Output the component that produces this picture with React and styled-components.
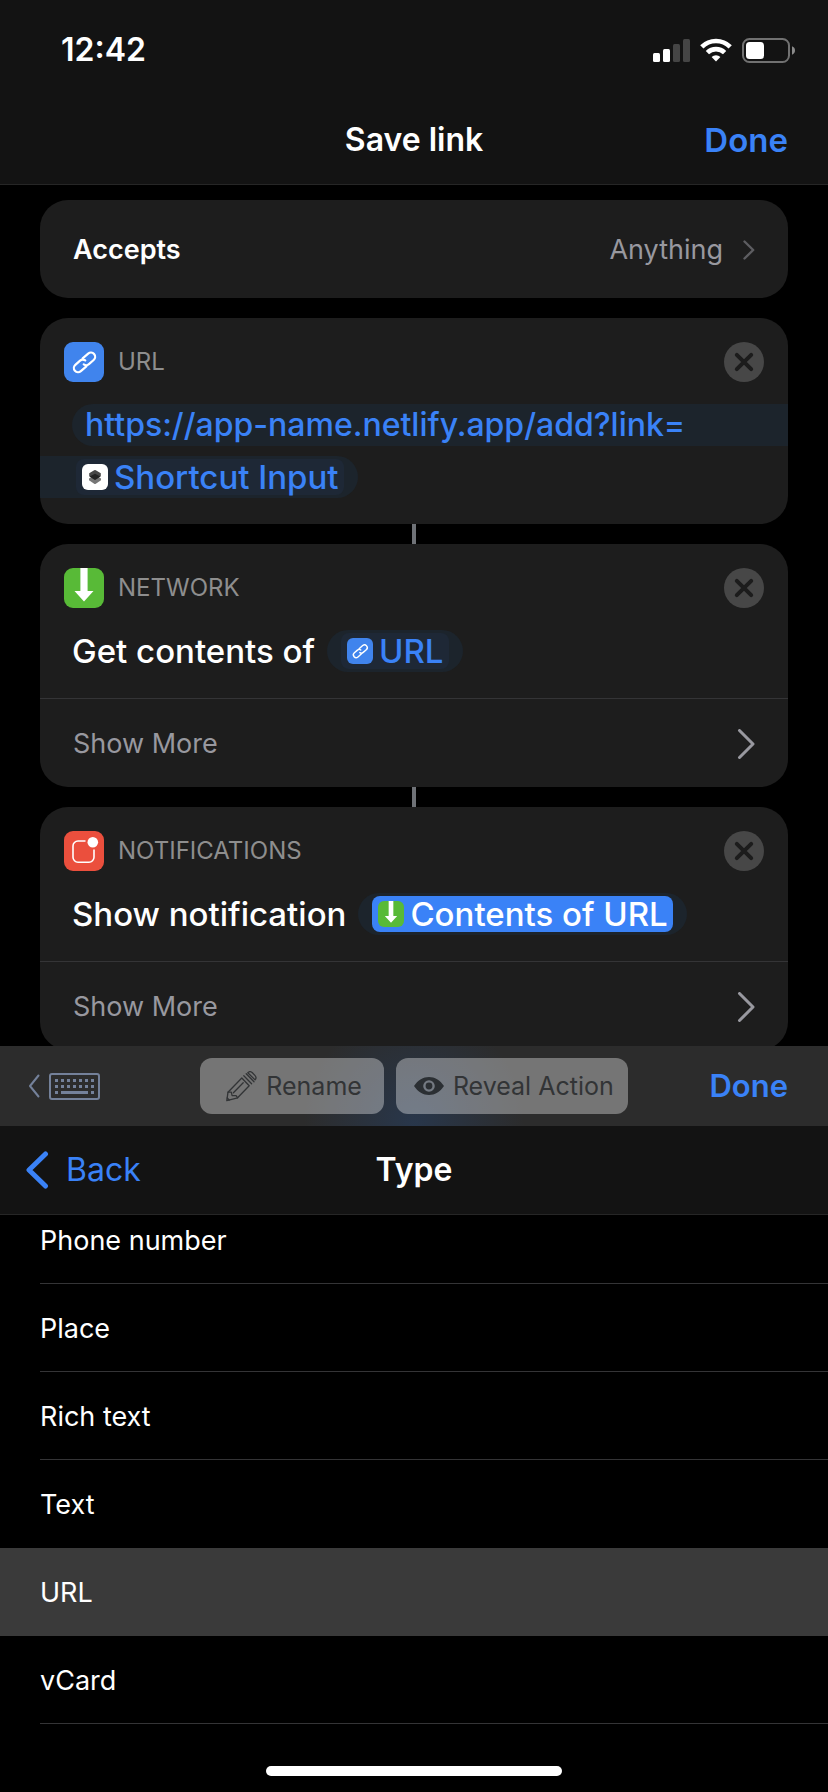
import React from 'react';
import styled, { createGlobalStyle, css } from 'styled-components';

const color = {
  bar: '#131313',
  card: '#1d1d1d',
  line: '#343436',
  blue: '#3a82f7',
  muted: '#98989f',
  label: '#8e8e8e',
};

const GlobalStyle = createGlobalStyle`
  *, *::before, *::after { box-sizing: border-box; }
  body { margin: 0; background: #000; }
  button, input { font: inherit; color: inherit; background: none; border: 0; padding: 0; margin: 0; }
  button { cursor: pointer; }
  svg { display: block; flex: none; }
`;

const Screen = styled.div`
  display: flex;
  flex-direction: column;
  height: 100vh;
  overflow: hidden;
  background: #000;
  color: #fff;
  font-family: Inter, "Liberation Sans", sans-serif;
  font-size: 27px;
  line-height: 40px;
`;

const TopBar = styled.header`
  flex: none;
  background: ${color.bar};
  border-bottom: 1px solid #262626;
`;

const StatusBar = styled.div`
  display: flex;
  align-items: center;
  justify-content: space-between;
  height: 96px;
  padding: 4px 33px 0 61px;
  font-size: 32px;
  font-weight: 600;
`;

const StatusIcons = styled.div`
  display: flex;
  align-items: center;
  gap: 10px;
`;

const NavBar = styled.div`
  display: grid;
  grid-template-columns: 1fr auto 1fr;
  align-items: center;
  height: 88px;
  padding: 0 ${(p) => (p.$back ? '24px' : '40px')};
`;

const NavTitle = styled.h1`
  grid-column: 2;
  margin: 0;
  font-size: 32px;
  line-height: 40px;
  font-weight: 600;
`;

const DoneButton = styled.button`
  grid-column: 3;
  justify-self: end;
  color: ${color.blue};
  font-size: ${(p) => (p.$small ? '31px' : '33px')};
  font-weight: 600;
`;

const BackButton = styled.button`
  display: flex;
  align-items: center;
  justify-self: start;
  gap: 17px;
  color: ${color.blue};
  font-size: 32px;
`;

const Editor = styled.main`
  flex: 1 1 0;
  min-height: 0;
  overflow: hidden;
  padding: 15px 40px 0;
`;

const Card = styled.section`
  overflow: hidden;
  border-radius: 28px;
  background: ${color.card};
`;

const AcceptsRow = styled.button`
  display: flex;
  align-items: center;
  width: 100%;
  height: 98px;
  margin-bottom: 20px;
  padding: 2px 33px 0;
  border-radius: 28px;
  background: ${color.card};
  font-weight: 600;
`;

const AcceptsValue = styled.span`
  margin-left: auto;
  padding-right: 20px;
  color: ${color.muted};
  font-weight: 400;
`;

const Connector = styled.div`
  width: 4px;
  height: 20px;
  margin: 0 auto;
  background: #6f7277;
`;

const CardHeader = styled.div`
  display: flex;
  align-items: center;
  gap: 14px;
  padding: 24px 24px 22px;
`;

const CardLabel = styled.h2`
  margin: 0;
  color: ${color.label};
  font-size: 24px;
  line-height: 40px;
  font-weight: 400;
`;

const CloseButton = styled.button`
  margin-left: auto;
`;

const AppIcon = styled.span`
  display: block;
  flex: none;
  overflow: hidden;
  width: ${(p) => (p.$small ? '26px' : '40px')};
  height: ${(p) => (p.$small ? '26px' : '40px')};
  border-radius: ${(p) => (p.$small ? '6px' : '9px')};
  background: ${(p) => p.$tint};

  svg {
    width: 100%;
    height: 100%;
  }
`;

const actionText = css`
  font-size: 33px;
  line-height: 42px;
  font-weight: 500;
`;

const ActionLine = styled.div`
  display: flex;
  align-items: center;
  gap: 12px;
  padding: 0 32px 26px;
  ${actionText}
`;

const FieldLines = styled.div`
  display: flex;
  flex-direction: column;
  align-items: flex-start;
  gap: 10px;
  padding-bottom: 26px;
  ${actionText}
`;

const UrlField = styled.input`
  align-self: stretch;
  height: 42px;
  margin-left: 32px;
  padding-left: 13px;
  border-radius: 21px 0 0 21px;
  background: #1c242c;
  color: ${color.blue};
  font-size: 32px;
  outline: none;
`;

const Pill = styled.div`
  display: flex;
  align-items: center;
  height: 42px;
  padding: ${(p) => (p.$continued ? '0 14px 0 36px' : '0 14px')};
  border-radius: ${(p) => (p.$continued ? '0 21px 21px 0' : '21px')};
  background: #1c242c;
`;

const Token = styled.button`
  display: flex;
  align-items: center;
  gap: 6px;
  height: 36px;
  padding: 0 5px 0 6px;
  border-radius: 8px;
  line-height: 36px;
  background: ${(p) => (p.$selected ? color.blue : '#1e2836')};
  color: ${(p) => (p.$selected ? '#fff' : color.blue)};
`;

const ShowMoreRow = styled.button`
  display: flex;
  align-items: center;
  justify-content: space-between;
  width: 100%;
  height: 89px;
  padding: 1px 33px 0;
  border-top: 1px solid ${color.line};
  color: ${color.muted};
`;

const Sheet = styled.section`
  flex: none;
`;

const Toolbar = styled.div`
  display: grid;
  grid-template-columns: 1fr auto 1fr;
  align-items: center;
  height: 80px;
  padding: 0 40px;
  background:
    radial-gradient(ellipse 110px 120px at 50% 100%, rgba(38, 62, 96, 0.6), rgba(38, 62, 96, 0)),
    #2c2c2c;
`;

const KeyboardButton = styled.button`
  display: flex;
  align-items: center;
  justify-self: start;
  gap: 9px;
  margin-left: -12px;
`;

const ToolbarActions = styled.div`
  display: flex;
  gap: 12px;
`;

const ToolbarButton = styled.button`
  display: flex;
  align-items: center;
  gap: 9px;
  height: 56px;
  padding: ${(p) => (p.$wide ? '0 22px 0 26px' : '0 14px 0 18px')};
  border-radius: 12px;
  background: rgba(255, 255, 255, 0.35);
  color: #323436;
  font-size: 25px;
`;

const SheetNav = styled.div`
  position: relative;
  background: ${color.bar};
  border-bottom: 1px solid #262626;
`;

const TypeViewport = styled.div`
  overflow: hidden;
`;

const TypeList = styled.ul`
  margin: -19px 0 0;
  padding: 0;
  list-style: none;
`;

const TypeItem = styled.li`
  padding-left: 40px;
  background: ${(p) => (p.$selected ? '#3a3a3a' : 'transparent')};
`;

const TypeButton = styled.button`
  display: block;
  width: 100%;
  height: 88px;
  padding-top: 3px;
  border-bottom: 1px solid ${(p) => (p.$divider ? color.line : 'transparent')};
  text-align: left;
`;

const HomeArea = styled.div`
  padding: 42px 0 16px;
`;

const HomeIndicator = styled.div`
  width: 296px;
  height: 10px;
  margin: 0 auto;
  border-radius: 5px;
  background: #fff;
`;

function Signal() {
  return (
    <svg width="37" height="24" viewBox="0 0 37 24" fill="#fff" aria-hidden="true">
      <rect x="0" y="15" width="7" height="9" rx="1.5" />
      <rect x="10" y="11" width="7" height="13" rx="1.5" />
      <rect x="20" y="6" width="7" height="18" rx="1.5" fill="#454545" />
      <rect x="30" y="1" width="7" height="23" rx="1.5" fill="#454545" />
    </svg>
  );
}

function Wifi() {
  return (
    <svg width="32" height="24" viewBox="0 0 32 24" aria-hidden="true">
      <g fill="none" stroke="#fff" strokeWidth="4.6">
        <path d="M1.8 8.8a20.2 20.2 0 0 1 28.4 0" />
        <path d="M7.4 14.7a12.2 12.2 0 0 1 17.2 0" />
      </g>
      <path d="M16 23.4l-4.4-4.4a6.2 6.2 0 0 1 8.8 0z" fill="#fff" />
    </svg>
  );
}

function Battery() {
  return (
    <svg width="53" height="25" viewBox="0 0 53 25" aria-hidden="true">
      <rect x="1" y="1" width="46" height="23" rx="6.5" fill="none" stroke="#717171" strokeWidth="2" />
      <rect x="4" y="4" width="18" height="17" rx="3.5" fill="#fff" />
      <path d="M50 8.3c1.8.7 3 2.2 3 4.2s-1.2 3.5-3 4.2z" fill="#8a8a8a" />
    </svg>
  );
}

function Chevron({ size = 'large' }) {
  return size === 'small' ? (
    <svg width="12" height="20" viewBox="0 0 12 20" fill="none" stroke="#5d5d61" strokeWidth="2.4" strokeLinecap="round" strokeLinejoin="round">
      <path d="M1.5 1.5l8.7 8.5-8.7 8.5" />
    </svg>
  ) : (
    <svg width="18" height="30" viewBox="0 0 18 30" fill="none" stroke="#98989f" strokeWidth="3" strokeLinecap="round" strokeLinejoin="round">
      <path d="M2.5 1.5l13.5 13.500-13.500 13.500" />
    </svg>
  );
}

function CloseIcon() {
  return (
    <svg width="40" height="40" viewBox="0 0 40 40" aria-hidden="true">
      <circle cx="20" cy="20" r="20" fill="#474747" />
      <path d="M12.8 12.8l14.4 14.4M27.2 12.8l-14.4 14.4" stroke="#1c1c1c" strokeWidth="4" strokeLinecap="round" />
    </svg>
  );
}

function LinkGlyph() {
  return (
    <svg viewBox="0 0 40 40" aria-hidden="true">
      <g transform="translate(20.5 20.4) rotate(-41)" fill="none" stroke="#fff" strokeWidth="2.2" strokeLinecap="round">
        <path d="M1.2 -4.2H8.5A4.2 4.2 0 0 1 8.5 4.2H2.2A4.2 4.2 0 0 1 -1.9 1" />
        <path d="M-1.2 4.2H-8.5A4.2 4.2 0 0 1 -8.5 -4.2H-2.2A4.2 4.2 0 0 1 1.9 -1" />
      </g>
    </svg>
  );
}

function DownloadGlyph() {
  return (
    <svg viewBox="0 0 40 40" aria-hidden="true">
      <path d="M16.4 0h7.2v23h5.9L20 33.4 10.5 23h5.9z" fill="#fff" />
    </svg>
  );
}

function NotificationGlyph() {
  return (
    <svg viewBox="0 0 40 40" aria-hidden="true">
      <path d="M21.5 10H14a5 5 0 0 0-5 5v11.2a5 5 0 0 0 5 5h11a5 5 0 0 0 5-5V18.5" fill="none" stroke="#fff" strokeWidth="1.6" />
      <circle cx="28.8" cy="11.3" r="5.3" fill="#fff" />
    </svg>
  );
}

function ShortcutGlyph() {
  return (
    <svg viewBox="0 0 26 26" aria-hidden="true">
      <path d="M7 14.5l6-3.5 6 3.5v1.7l-5.2 3.5a1.5 1.5 0 0 1-1.6 0L7 16.2z" fill="#767676" />
      <path d="M7.2 9.3l5-3.1a1.5 1.5 0 0 1 1.6 0l5 3.1v3l-5 3.2a1.5 1.5 0 0 1-1.6 0l-5-3.2z" fill="#474747" />
      <path d="M7.6 12.5l5.4-2.8 5.4 2.8-4.6 3a1.5 1.5 0 0 1-1.6 0z" fill="#232323" />
    </svg>
  );
}

function KeyboardGlyph() {
  const keys = [];
  for (let row = 0; row < 2; row += 1) {
    for (let col = 0; col < 7; col += 1) {
      keys.push(<rect key={`${row}-${col}`} x={6 + col * 6} y={6 + row * 6} width="3" height="3" />);
    }
  }
  return (
    <svg width="51" height="27" viewBox="0 0 51 27" fill="#74819a" aria-hidden="true">
      <rect x="1" y="1" width="49" height="25" rx="2" fill="none" stroke="#74819a" strokeWidth="2" />
      {keys}
      <rect x="6" y="18" width="3" height="3" />
      <rect x="12" y="18" width="27" height="3" />
      <rect x="42" y="18" width="3" height="3" />
    </svg>
  );
}

function PencilGlyph() {
  return (
    <svg width="31" height="31" viewBox="0 0 31 31" fill="none" stroke="#323436" strokeWidth="1.3" strokeLinejoin="round" strokeLinecap="round" aria-hidden="true">
      <path d="M.8 29.600L2 21.2 15.8 7l7.400 7.800L11.600 26.800z" />
      <path d="M2 21.200l3.300-.1.800 3.500 4 .1 1.500 2.100" />
      <path d="M1.200 27l2 2" />
      <path d="M7.400 21.800L17.200 11.800" />
      <path d="M17.800 4.800l7.800 8M20.200 2.800l7.800 8" />
      <path d="M21.800 1.700c1.300-1.200 3.400-1.100 4.600.1l2.500 2.600c1.200 1.300 1.400 3.200.2 4.500z" />
    </svg>
  );
}

function EyeGlyph() {
  return (
    <svg width="30" height="18" viewBox="0 0 30 18" aria-hidden="true">
      <path
        fill="#2b2f33"
        fillRule="evenodd"
        d="M0 9C4 3 9.300 0 15 0s11 3 15 9c-4 6-9.300 9-15 9S4 15 0 9zM15 3.200a5.800 5.800 0 1 0 0 11.600 5.800 5.800 0 0 0 0-11.600zM15 5.600a3.400 3.400 0 1 1 0 6.800 3.400 3.400 0 0 1 0-6.800z"
      />
    </svg>
  );
}

const icons = {
  link: { tint: '#4084ed', Glyph: LinkGlyph },
  network: { tint: '#58ba37', Glyph: DownloadGlyph },
  notification: { tint: '#eb4f3d', Glyph: NotificationGlyph },
  shortcut: { tint: '#ffffff', Glyph: ShortcutGlyph },
};

function ActionIcon({ name, small }) {
  const { tint, Glyph } = icons[name];
  return (
    <AppIcon $tint={tint} $small={small}>
      <Glyph />
    </AppIcon>
  );
}

function ActionCard({ icon, label, more, children }) {
  return (
    <Card>
      <CardHeader>
        <ActionIcon name={icon} />
        <CardLabel>{label}</CardLabel>
        <CloseButton aria-label="Remove action">
          <CloseIcon />
        </CloseButton>
      </CardHeader>
      {children}
      {more && (
        <ShowMoreRow>
          Show More
          <Chevron />
        </ShowMoreRow>
      )}
    </Card>
  );
}

function VariableToken({ icon, selected, continued, children }) {
  return (
    <Pill $continued={continued}>
      <Token $selected={selected}>
        <ActionIcon name={icon} small />
        {children}
      </Token>
    </Pill>
  );
}

const types = ['Phone number', 'Place', 'Rich text', 'Text', 'URL', 'vCard'];
const selectedType = 'URL';

export default function App() {
  return (
    <Screen>
      <GlobalStyle />
      <TopBar>
        <StatusBar>
          <span>12:42</span>
          <StatusIcons>
            <Signal />
            <Wifi />
            <Battery />
          </StatusIcons>
        </StatusBar>
        <NavBar>
          <NavTitle>Save link</NavTitle>
          <DoneButton>Done</DoneButton>
        </NavBar>
      </TopBar>

      <Editor>
        <AcceptsRow>
          Accepts
          <AcceptsValue>Anything</AcceptsValue>
          <Chevron size="small" />
        </AcceptsRow>
        <ActionCard icon="link" label="URL">
          <FieldLines>
            <UrlField aria-label="URL" defaultValue="https://app-name.netlify.app/add?link=" />
            <VariableToken icon="shortcut" continued>Shortcut Input</VariableToken>
          </FieldLines>
        </ActionCard>
        <Connector />
        <ActionCard icon="network" label="NETWORK" more>
          <ActionLine>
            Get contents of
            <VariableToken icon="link">URL</VariableToken>
          </ActionLine>
        </ActionCard>
        <Connector />
        <ActionCard icon="notification" label="NOTIFICATIONS" more>
          <ActionLine>
            Show notification
            <VariableToken icon="network" selected>Contents of URL</VariableToken>
          </ActionLine>
        </ActionCard>
      </Editor>

      <Sheet>
        <Toolbar>
          <KeyboardButton aria-label="Show keyboard">
            <svg width="12" height="24" viewBox="0 0 12 24" fill="none" stroke="#74819a" strokeWidth="2" strokeLinecap="round" strokeLinejoin="round">
              <path d="M10.5 1.5L2 12l8.5 10.5" />
            </svg>
            <KeyboardGlyph />
          </KeyboardButton>
          <ToolbarActions>
            <ToolbarButton $wide>
              <PencilGlyph />
              Rename
            </ToolbarButton>
            <ToolbarButton>
              <EyeGlyph />
              Reveal Action
            </ToolbarButton>
          </ToolbarActions>
          <DoneButton $small>Done</DoneButton>
        </Toolbar>
        <SheetNav>
          <NavBar $back>
            <BackButton>
              <svg width="25" height="38" viewBox="0 0 25 38" fill="none" stroke="#3a82f7" strokeWidth="5" strokeLinecap="round" strokeLinejoin="round">
                <path d="M21.5 3L5 19l16.5 16" />
              </svg>
              Back
            </BackButton>
            <NavTitle as="h2">Type</NavTitle>
          </NavBar>
        </SheetNav>
        <TypeViewport>
          <TypeList>
            {types.map((type, i) => (
              <TypeItem key={type} $selected={type === selectedType}>
                <TypeButton $divider={type !== selectedType && types[i + 1] !== selectedType}>{type}</TypeButton>
              </TypeItem>
            ))}
          </TypeList>
        </TypeViewport>
        <HomeArea>
          <HomeIndicator />
        </HomeArea>
      </Sheet>
    </Screen>
  );
}
